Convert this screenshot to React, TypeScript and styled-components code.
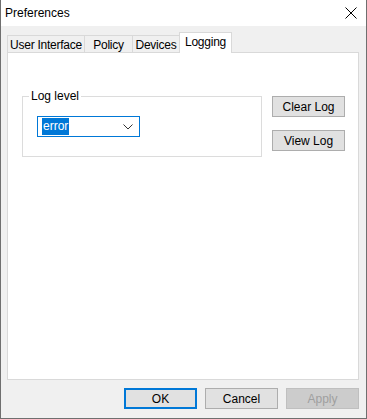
import * as React from "react";
import styled, { createGlobalStyle } from "styled-components";

const GlobalStyle = createGlobalStyle`
  html, body {
    margin: 0;
    padding: 0;
    background: #ffffff;
  }
  * {
    box-sizing: border-box;
  }
`;

const Window = styled.div`
  width: 367px;
  height: 419px;
  display: flex;
  flex-direction: column;
  border: 1px solid #6f6f6f;
  border-top: none;
  background: #f0f0f0;
  font-family: "Liberation Sans", Arial, sans-serif;
  font-size: 12px;
  color: #000000;
`;

const TitleBar = styled.div`
  height: 26px;
  background: #ffffff;
  display: flex;
  align-items: center;
  justify-content: space-between;
  padding: 0 9px 0 4px;

  .title {
    font-size: 12px;
    padding-bottom: 1px;
  }
`;

const Body = styled.div`
  flex: 1;
  display: flex;
  flex-direction: column;
  padding: 7px 7px 0 6px;
`;

const TabStrip = styled.div`
  display: flex;
  align-items: flex-end;
  height: 20px;
  padding-left: 1px;
  position: relative;
  z-index: 1;
  margin-bottom: -1px;
`;

const Tab = styled.div<{ active?: boolean; w: number }>`
  width: ${(p) => p.w}px;
  height: ${(p) => (p.active ? 21 : 18)}px;
  display: flex;
  align-items: center;
  justify-content: center;
  letter-spacing: -0.25px;
  background: ${(p) => (p.active ? "#ffffff" : "#f0f0f0")};
  border: 1px solid #d9d9d9;
  border-bottom: ${(p) => (p.active ? "none" : "1px solid #d9d9d9")};
  margin-left: -1px;
  padding-top: 1px;
  padding-bottom: ${(p) => (p.active ? 3 : 0)}px;
`;

const Panel = styled.div`
  flex: 1;
  background: #ffffff;
  border: 1px solid #d9d9d9;
  display: flex;
  align-items: flex-start;
  padding: 43px 0 0 14px;
  gap: 10px;
`;

const GroupBox = styled.fieldset`
  width: 240px;
  height: 61px;
  margin: 0;
  border: 1px solid #dcdcdc;
  padding: 12px 0 0 14px;
  position: relative;

  legend {
    position: absolute;
    top: -7px;
    left: 6px;
    padding: 0 2px;
    background: #ffffff;
    line-height: 13px;
  }
`;

const Combo = styled.div`
  width: 103px;
  height: 21px;
  border: 1px solid #0078d7;
  display: flex;
  align-items: center;
  justify-content: space-between;
  padding: 0 6px 0 4px;
  margin-top: 7px;

  .sel {
    background: #0078d7;
    color: #ffffff;
    padding: 1px 1px 2px 1px;
    line-height: 14px;
  }
`;

const SideCol = styled.div`
  display: flex;
  flex-direction: column;
  gap: 13px;
`;

const Button = styled.div<{ w?: number; primary?: boolean; disabled?: boolean }>`
  width: ${(p) => p.w || 73}px;
  height: 21px;
  display: flex;
  align-items: center;
  justify-content: center;
  background: ${(p) => (p.disabled ? "#cccccc" : "#e1e1e1")};
  color: ${(p) => (p.disabled ? "#9f9f9f" : "#000000")};
  border: ${(p) =>
    p.primary ? "2px solid #0078d7" : p.disabled ? "1px solid #bfbfbf" : "1px solid #adadad"};
`;

const Footer = styled.div`
  height: 38px;
  display: flex;
  justify-content: flex-end;
  align-items: flex-start;
  padding-top: 8px;
  gap: 8px;
`;

export default function App() {
  return (
    <>
      <GlobalStyle />
      <Window>
        <TitleBar>
          <span className="title">Preferences</span>
          <svg width="12" height="12" viewBox="0 0 12 12">
            <path d="M0.5 0.5 L11.5 11.5 M11.5 0.5 L0.5 11.5" stroke="#000" strokeWidth="1" />
          </svg>
        </TitleBar>
        <Body>
          <TabStrip>
            <Tab w={78}>User Interface</Tab>
            <Tab w={49}>Policy</Tab>
            <Tab w={48}>Devices</Tab>
            <Tab w={53} active>
              Logging
            </Tab>
          </TabStrip>
          <Panel>
            <GroupBox>
              <legend>Log level</legend>
              <Combo>
                <span className="sel">error</span>
                <svg width="10" height="6" viewBox="0 0 10 6">
                  <path d="M0.5 0.5 L5 5 L9.5 0.5" fill="none" stroke="#333" strokeWidth="1" />
                </svg>
              </Combo>
            </GroupBox>
            <SideCol>
              <Button w={73}>Clear Log</Button>
              <Button w={73}>View Log</Button>
            </SideCol>
          </Panel>
          <Footer>
            <Button primary>OK</Button>
            <Button>Cancel</Button>
            <Button disabled>Apply</Button>
          </Footer>
        </Body>
      </Window>
    </>
  );
}
